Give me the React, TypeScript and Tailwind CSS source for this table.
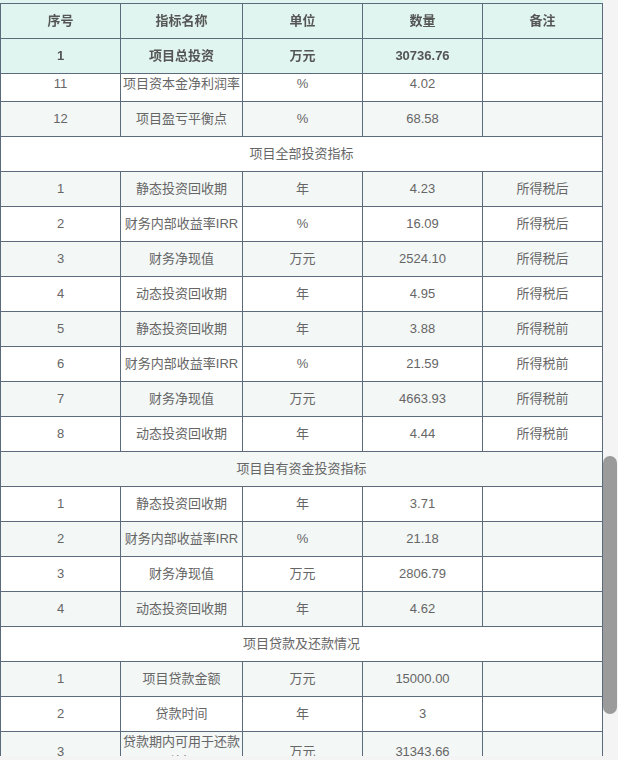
import { useLayoutEffect, useRef, useState } from "react";

type Item = { no: string; name: string; unit: string; value: string; note?: string };
type Section = { title: string; rows: Item[] };

const sections: Section[] = [
  {
    title: "项目总投资构成",
    rows: [
      { no: "1", name: "建设投资", unit: "万元", value: "24615.32" },
      { no: "2", name: "工程费用", unit: "万元", value: "19826.45" },
      { no: "3", name: "建筑工程费", unit: "万元", value: "8213.60" },
      { no: "4", name: "设备购置费", unit: "万元", value: "9874.12" },
      { no: "5", name: "安装工程费", unit: "万元", value: "1738.73" },
      { no: "6", name: "工程建设其他费用", unit: "万元", value: "3616.71" },
      { no: "7", name: "土地费用", unit: "万元", value: "2160.00" },
      { no: "8", name: "预备费", unit: "万元", value: "1172.16" },
      { no: "9", name: "建设期利息", unit: "万元", value: "712.50" },
      { no: "10", name: "流动资金", unit: "万元", value: "5408.94" },
      { no: "11", name: "铺底流动资金", unit: "万元", value: "1622.68" },
    ],
  },
  {
    title: "资金筹措",
    rows: [
      { no: "1", name: "项目资本金", unit: "万元", value: "15736.76" },
      { no: "2", name: "银行贷款", unit: "万元", value: "15000.00" },
      { no: "3", name: "资本金占比", unit: "%", value: "51.20" },
      { no: "4", name: "贷款利率", unit: "%", value: "4.75" },
      { no: "5", name: "贷款期限", unit: "年", value: "3" },
    ],
  },
  {
    title: "项目建设规模",
    rows: [
      { no: "1", name: "建设期", unit: "月", value: "18" },
      { no: "2", name: "占地面积", unit: "平方米", value: "36000.00" },
      { no: "3", name: "总建筑面积", unit: "平方米", value: "52800.00" },
      { no: "4", name: "劳动定员", unit: "人", value: "260" },
      { no: "5", name: "年工作日", unit: "天", value: "300" },
      { no: "6", name: "设计产能", unit: "万件", value: "120.00" },
      { no: "7", name: "达产期", unit: "年", value: "2" },
      { no: "8", name: "计算期", unit: "年", value: "12" },
    ],
  },
  {
    title: "项目经济效益指标",
    rows: [
      { no: "1", name: "年营业收入", unit: "万元", value: "42860.00" },
      { no: "2", name: "年总成本费用", unit: "万元", value: "35214.58" },
      { no: "3", name: "年经营成本", unit: "万元", value: "31862.27" },
      { no: "4", name: "年税金及附加", unit: "万元", value: "286.14" },
      { no: "5", name: "年利润总额", unit: "万元", value: "7359.28" },
      { no: "6", name: "年所得税", unit: "万元", value: "1839.82" },
      { no: "7", name: "年净利润", unit: "万元", value: "5519.46" },
      { no: "8", name: "年纳税总额", unit: "万元", value: "4268.35" },
      { no: "9", name: "总投资收益率", unit: "%", value: "24.26" },
      { no: "10", name: "投资利税率", unit: "%", value: "31.43" },
      { no: "11", name: "项目资本金净利润率", unit: "%", value: "4.02" },
      { no: "12", name: "项目盈亏平衡点", unit: "%", value: "68.58" },
    ],
  },
  {
    title: "项目全部投资指标",
    rows: [
      { no: "1", name: "静态投资回收期", unit: "年", value: "4.23", note: "所得税后" },
      { no: "2", name: "财务内部收益率IRR", unit: "%", value: "16.09", note: "所得税后" },
      { no: "3", name: "财务净现值", unit: "万元", value: "2524.10", note: "所得税后" },
      { no: "4", name: "动态投资回收期", unit: "年", value: "4.95", note: "所得税后" },
      { no: "5", name: "静态投资回收期", unit: "年", value: "3.88", note: "所得税前" },
      { no: "6", name: "财务内部收益率IRR", unit: "%", value: "21.59", note: "所得税前" },
      { no: "7", name: "财务净现值", unit: "万元", value: "4663.93", note: "所得税前" },
      { no: "8", name: "动态投资回收期", unit: "年", value: "4.44", note: "所得税前" },
    ],
  },
  {
    title: "项目自有资金投资指标",
    rows: [
      { no: "1", name: "静态投资回收期", unit: "年", value: "3.71" },
      { no: "2", name: "财务内部收益率IRR", unit: "%", value: "21.18" },
      { no: "3", name: "财务净现值", unit: "万元", value: "2806.79" },
      { no: "4", name: "动态投资回收期", unit: "年", value: "4.62" },
    ],
  },
  {
    title: "项目贷款及还款情况",
    rows: [
      { no: "1", name: "项目贷款金额", unit: "万元", value: "15000.00" },
      { no: "2", name: "贷款时间", unit: "年", value: "3" },
      { no: "3", name: "贷款期内可用于还款总额", unit: "万元", value: "31343.66" },
      { no: "4", name: "借款偿还期", unit: "年", value: "2.86" },
      { no: "5", name: "利息备付率", unit: "倍", value: "9.42" },
      { no: "6", name: "偿债备付率", unit: "倍", value: "2.17" },
    ],
  },
];

const cell = "h-[35px] border-b border-r border-[#5b6b7c] p-0 text-center align-middle leading-5";
const head = "bg-[#e0f5ef] font-bold text-[#555]";

export default function App() {
  const boxRef = useRef<HTMLDivElement>(null);
  const anchorRef = useRef<HTMLTableRowElement>(null);
  const [thumb, setThumb] = useState({ top: 0, height: 0 });

  const measure = () => {
    const box = boxRef.current;
    if (!box) return;
    const track = box.clientHeight;
    const h = Math.max(30, (track * box.clientHeight) / box.scrollHeight);
    const max = box.scrollHeight - box.clientHeight;
    const top = max > 0 ? (box.scrollTop / max) * (track - h) : 0;
    setThumb({ top, height: h });
  };

  // scroll so that row "11 项目资本金净利润率" sits just under the sticky header
  useLayoutEffect(() => {
    const box = boxRef.current;
    const row = anchorRef.current;
    if (!box || !row) return;
    box.scrollTop += row.getBoundingClientRect().top - box.getBoundingClientRect().top - 67;
    measure();
  }, []);

  return (
    <div
      className="h-[760px] w-full bg-[#f4f4f4] text-[13px] text-[#666]"
      style={{ fontFamily: '"Liberation Sans", "Noto Sans CJK SC", sans-serif' }}
    >
      <div className="flex h-[756px] w-[618px]">
        <div
          ref={boxRef}
          onScroll={measure}
          className="h-full w-[603px] overflow-x-hidden overflow-y-scroll bg-[#f4f4f4] [scrollbar-width:none]"
        >
          <table className="w-[603px] table-fixed border-separate border-spacing-0">
            <colgroup>
              <col className="w-[121px]" />
              <col className="w-[122px]" />
              <col className="w-[120px]" />
              <col className="w-[120px]" />
              <col className="w-[120px]" />
            </colgroup>
            <thead className="sticky top-[3px] z-10">
              <tr>
                {["序号", "指标名称", "单位", "数量", "备注"].map((t, i) => (
                  <th
                    key={t}
                    className={`${cell} ${head} h-[36px] border-t shadow-[0_-3px_0_0_#e0f5ef] ${i === 0 ? "border-l" : ""}`}
                  >
                    {t}
                  </th>
                ))}
              </tr>
              <tr>
                <th className={`${cell} ${head} border-l`}>1</th>
                <th className={`${cell} ${head}`}>项目总投资</th>
                <th className={`${cell} ${head}`}>万元</th>
                <th className={`${cell} ${head}`}>30736.76</th>
                <th className={`${cell} ${head}`}></th>
              </tr>
            </thead>
            <tbody>
              {sections.map((s) => [
                <tr key={s.title} className="odd:bg-white even:bg-[#f3f7f6]">
                  <td colSpan={5} className={`${cell} border-l`}>
                    {s.title}
                  </td>
                </tr>,
                ...s.rows.map((r) => (
                  <tr
                    key={s.title + r.no}
                    ref={r.name === "项目资本金净利润率" ? anchorRef : undefined}
                    className="odd:bg-white even:bg-[#f3f7f6]"
                  >
                    <td className={`${cell} border-l`}>{r.no}</td>
                    <td className={cell}>{r.name}</td>
                    <td className={cell}>{r.unit}</td>
                    <td className={cell}>{r.value}</td>
                    <td className={cell}>{r.note ?? ""}</td>
                  </tr>
                )),
              ])}
            </tbody>
          </table>
        </div>
        <div className="relative h-full w-[15px] bg-[#f4f4f4]">
          <div
            className="absolute left-0 w-[14px] rounded-full bg-[#9b9b9b]"
            style={{ top: thumb.top, height: thumb.height }}
          />
        </div>
      </div>
    </div>
  );
}
